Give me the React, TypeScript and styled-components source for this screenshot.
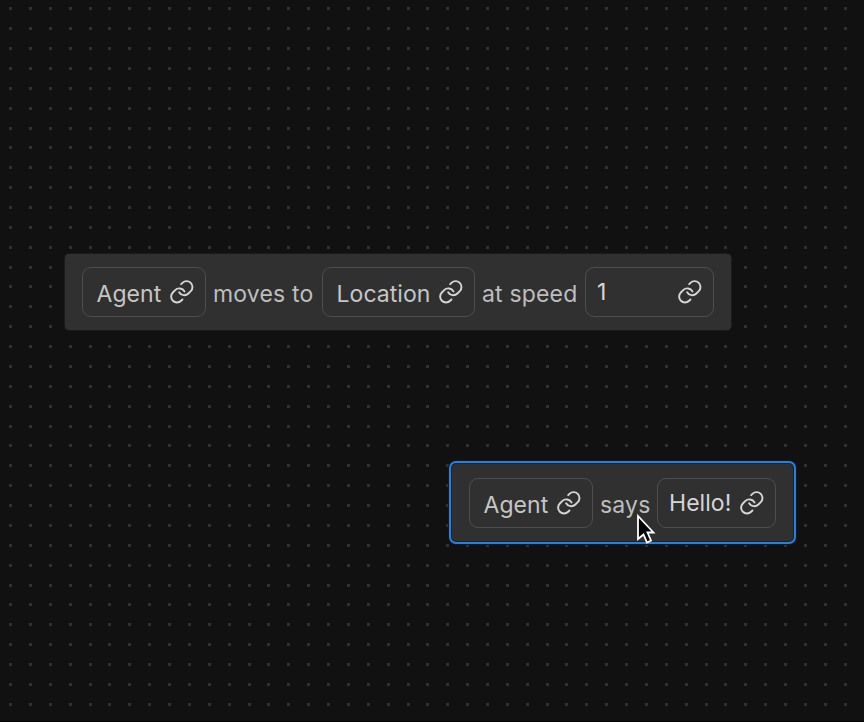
import React from "react";
import styled, { createGlobalStyle } from "styled-components";

const GlobalStyle = createGlobalStyle`
  * { box-sizing: border-box; }
  body { margin: 0; background: #111; overflow: hidden; }
`;

const Canvas = styled.main`
  position: relative;
  width: 864px;
  height: 722px;
  overflow: hidden;
  background: #111;
  border-bottom: 1px solid #020202;
  font-family: Inter, sans-serif;
  font-size: 23px;
  color: #bebebe;
`;

const Grid = styled.svg`
  position: absolute;
  inset: 0;
  width: 864px;
  height: 721px;
`;

const Node = styled.section<{ $x: number; $y: number; $w: number; $h: number; $selected?: boolean }>`
  position: absolute;
  left: ${(p) => p.$x}px;
  top: ${(p) => p.$y}px;
  width: ${(p) => p.$w}px;
  height: ${(p) => p.$h}px;
  display: flex;
  align-items: center;
  padding-left: 16.5px;
  padding-top: ${(p) => (p.$selected ? 1 : 0)}px;
  background: #303030;
  border-radius: 4px;
  box-shadow: ${(p) =>
    p.$selected ? "0 0 0 1px #10233c, 0 0 0 3px #2f7fd0, 0 0 0 4px #0a1a30" : "0 0 0 1px #1b1b1b"};
`;

const Chip = styled.div<{ $w: number; $value?: boolean }>`
  flex: none;
  width: ${(p) => p.$w}px;
  height: 49.5px;
  display: flex;
  align-items: center;
  justify-content: space-between;
  padding: 0 ${(p) => (p.$value ? "10px 0 11.5px" : "10px 0 14px")};
  border: 1.5px solid #4e4e4e;
  border-radius: 9px;
  color: ${(p) => (p.$value ? "#d6d6d6" : "#c6c6c6")};
`;

const Label = styled.span<{ $w: number; $raise?: boolean }>`
  width: ${(p) => p.$w}px;
  line-height: 28px;
  padding-top: ${(p) => (p.$raise ? 0 : 3)}px;
  white-space: nowrap;
  letter-spacing: 0.05px;
`;

const Word = styled.span<{ $w: number }>`
  flex: none;
  width: ${(p) => p.$w}px;
  padding: 3px 0 0 7px;
  line-height: 28px;
  white-space: nowrap;
  letter-spacing: 0.18px;
`;

const Icon = styled.svg`
  flex: none;
  width: 25.6px;
  height: 25.6px;
  margin-bottom: 0.5px;
  color: #d6d6d6;
`;

const Pointer = styled.svg`
  position: absolute;
  left: 635px;
  top: 513px;
  width: 22px;
  height: 33px;
`;

const LinkIcon = () => (
  <Icon viewBox="0 0 24 24" fill="none" stroke="currentColor" strokeWidth="1.8" strokeLinecap="round" strokeLinejoin="round">
    <path d="M9.5 12.4A5.5 5.5 0 0 0 18.19 13.59L20.39 11.39A5.5 5.5 0 0 0 12.61 3.61L11.4 4.82" />
    <path d="M14.5 11.6A5.5 5.5 0 0 0 5.81 10.41L3.61 12.61A5.5 5.5 0 0 0 11.39 20.39L12.6 19.18" />
  </Icon>
);

function Slot({ text, width, labelWidth, value }: { text: string; width: number; labelWidth: number; value?: boolean }) {
  return (
    <Chip $w={width} $value={value}>
      <Label $w={labelWidth} $raise={value}>{text}</Label>
      <LinkIcon />
    </Chip>
  );
}

const SPACING = 19.87;
const dots = Array.from({ length: 36 }, (_, row) =>
  Array.from({ length: 43 }, (_, col) => ({
    x: Math.round(9.1 + col * SPACING),
    y: Math.round(7.3 + row * SPACING),
  })),
).flat();

export default function App() {
  return (
    <>
      <GlobalStyle />
      <Canvas>
        <Grid fill="#313131">
          {dots.map((d) => (
            <rect key={`${d.x}-${d.y}`} x={d.x} y={d.y} width="3" height="3" />
          ))}
        </Grid>
        <Node $x={65} $y={254} $w={666} $h={76}>
          <Slot text="Agent" width={124.5} labelWidth={66} />
          <Word $w={115.5}>moves to</Word>
          <Slot text="Location" width={153.5} labelWidth={96} />
          <Word $w={109.5}>at speed</Word>
          <Slot text="1" width={129.5} labelWidth={20} value />
        </Node>
        <Node $x={452} $y={464} $w={341} $h={77} $selected>
          <Slot text="Agent" width={124.5} labelWidth={66} />
          <Word $w={63.5}>says</Word>
          <Slot text="Hello!" width={119} labelWidth={66} value />
        </Node>
        <Pointer viewBox="0 0 22 33">
          <path d="M3 3V26L8.5 21.5L12 29.5L16 27.5L12.5 19.5H18.5Z" fill="#000" stroke="#fff" strokeWidth="1.8" />
        </Pointer>
      </Canvas>
    </>
  );
}
